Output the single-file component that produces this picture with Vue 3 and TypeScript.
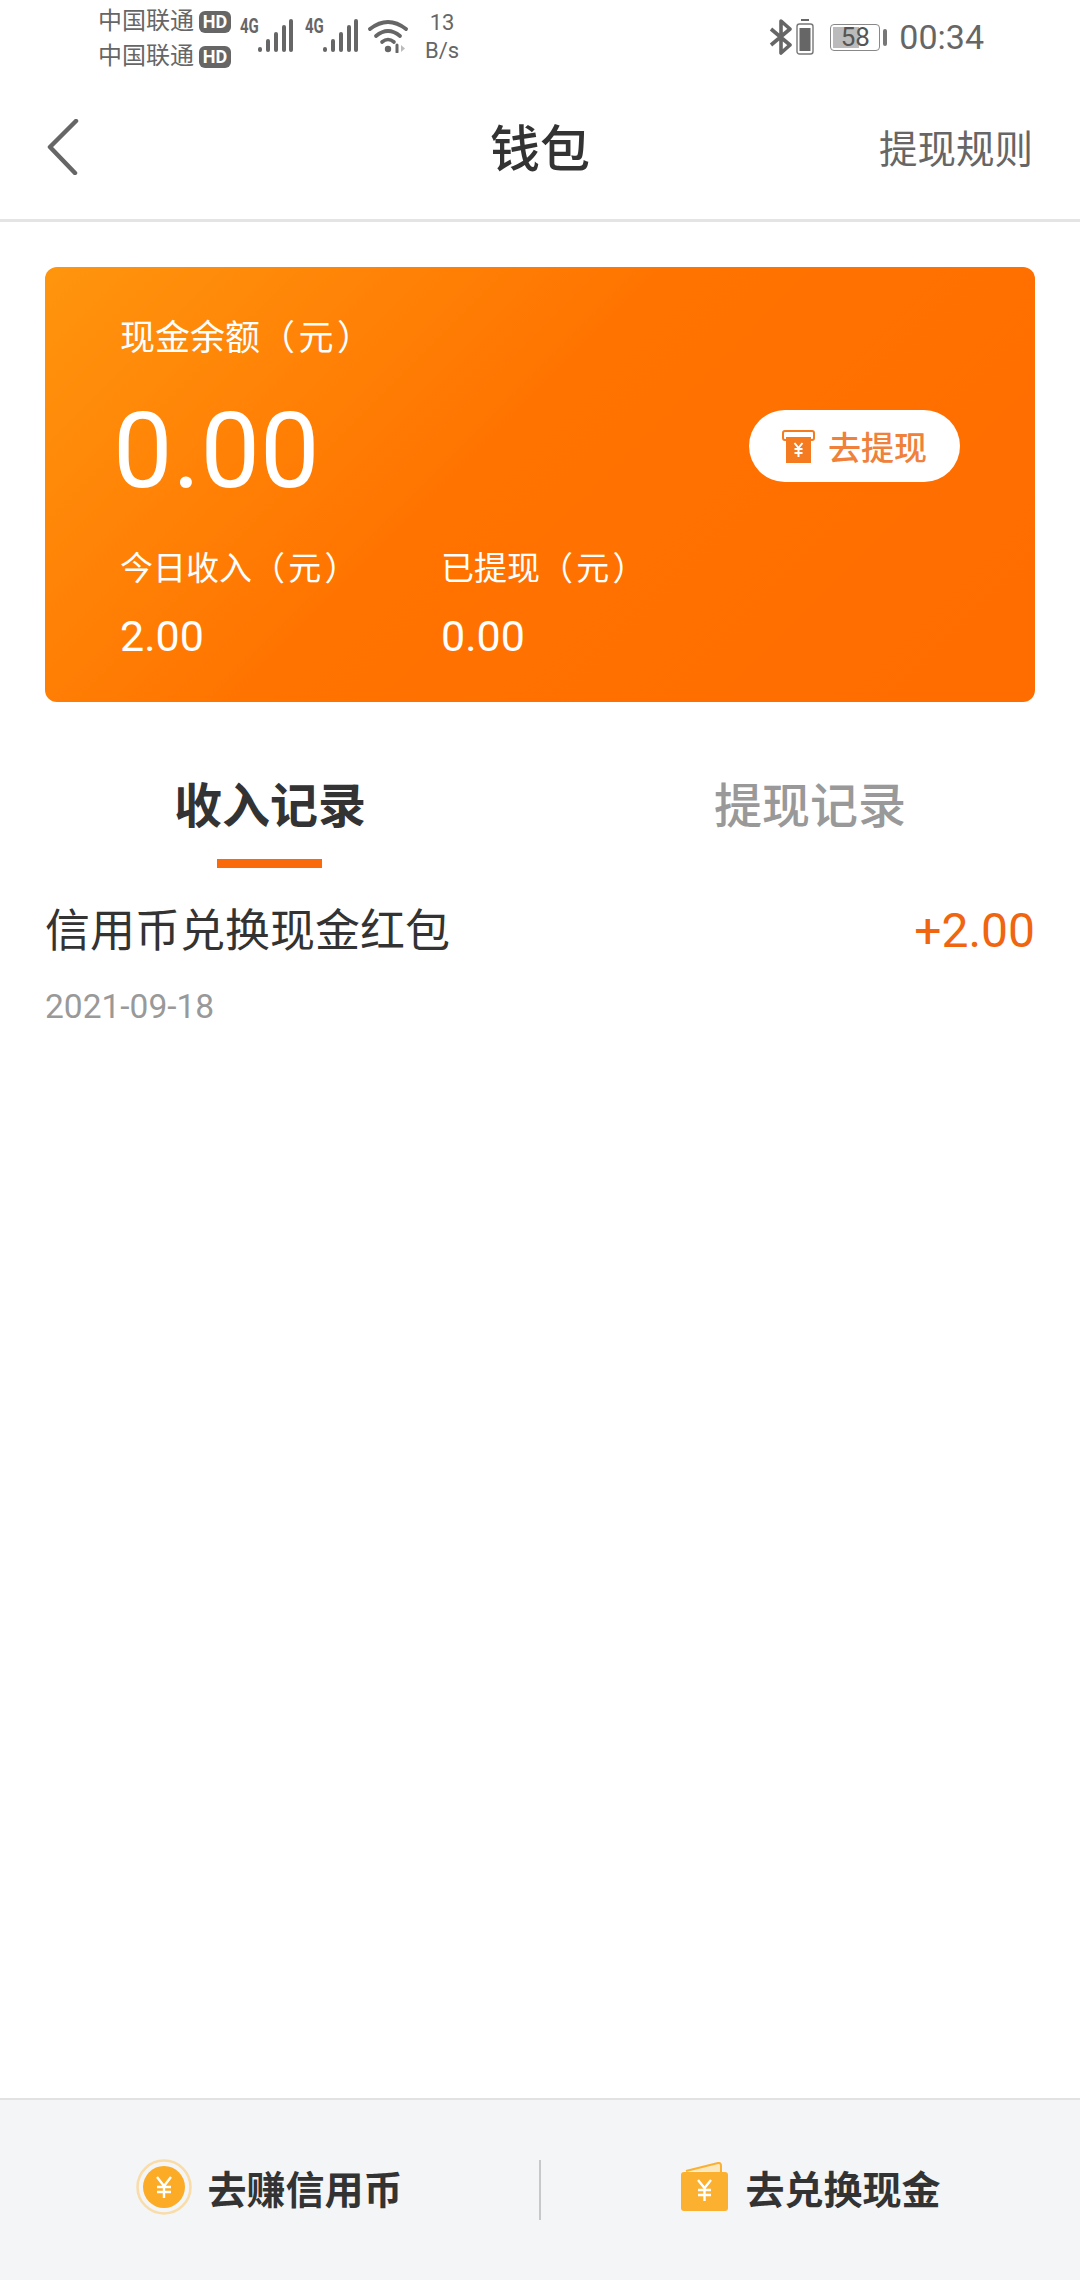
<script setup lang="ts">
interface RecordItem {
  title: string
  date: string
  amount: string
}

const records: RecordItem[] = [
  { title: '信用币兑换现金红包', date: '2021-09-18', amount: '+2.00' },
]

const signalBars = [
  { x: 0, h: 5 },
  { x: 8, h: 13 },
  { x: 16, h: 20 },
  { x: 24, h: 27 },
  { x: 31, h: 33 },
]
</script>

<template>
  <div class="page">
    <div class="status-bar">
      <div class="carriers">
        <div class="carrier"><span>中国联通</span><b class="hd">HD</b></div>
        <div class="carrier"><span>中国联通</span><b class="hd">HD</b></div>
      </div>
      <div v-for="n in 2" :key="n" class="net">
        <span class="net-label">4G</span>
        <svg class="bars" width="35" height="33" viewBox="0 0 35 33">
          <rect v-for="b in signalBars" :key="b.x" :x="b.x" :y="33 - b.h" width="4" :height="b.h" rx="2" fill="#666" />
        </svg>
      </div>
      <svg class="wifi" width="40" height="34" viewBox="0 0 40 34" fill="none" stroke="#666" stroke-linecap="round">
        <path d="M2 10 Q20 -4 38 10" stroke-width="3.8" />
        <path d="M8 17 Q20 7 32 17" stroke-width="3.8" />
        <path d="M14 23 Q20 18 26 23" stroke-width="3.6" />
        <circle cx="20" cy="30" r="3.200" fill="#666" stroke="none" />
        <path d="M29 26v7" stroke-width="3" />
        <path d="M33 26l4 3.500-4 3.500z" fill="#bbb" stroke="none" />
      </svg>
      <div class="speed"><span>13</span><span>B/s</span></div>
      <div class="status-right">
        <svg width="24" height="36" viewBox="0 0 24 36" fill="none" stroke="#666" stroke-width="3.600">
          <path d="M2 10l19 16-9 8V2l9 8L2 26" stroke-linejoin="round" />
        </svg>
        <svg width="18" height="36" viewBox="0 0 18 36">
          <rect x="5" y="0" width="8" height="2" fill="#666" />
          <rect x="1" y="5" width="16" height="30" rx="2.500" fill="none" stroke="#777" stroke-width="1.400" />
          <rect x="3.500" y="9" width="11" height="23" fill="#666" />
        </svg>
        <div class="battery">
          <div class="battery-body">
            <div class="battery-fill"></div>
            <span>58</span>
          </div>
          <div class="battery-cap"></div>
        </div>
        <span class="clock">00:34</span>
      </div>
    </div>

    <header class="nav">
      <svg class="back" width="32" height="56" viewBox="0 0 32 56" fill="none" stroke="#666" stroke-width="4.500" stroke-linecap="round" stroke-linejoin="round">
        <path d="M29 2 L3 28 L28 54" />
      </svg>
      <h1 class="nav-title">钱包</h1>
      <span class="nav-action">提现规则</span>
    </header>

    <section class="card">
      <div class="card-label">现金余额<span class="unit">（元）</span></div>
      <div class="balance-row">
        <span class="balance">0.00</span>
        <div class="withdraw-btn">
          <svg width="33" height="33" viewBox="0 0 33 33">
            <rect x="1" y="1" width="31" height="9" rx="2" fill="none" stroke="#f47b20" stroke-width="2" />
            <path d="M4 7h25v26H4z" fill="#f47b20" />
            <path d="M12.500 13l4 5 4-5M16.500 18v9M12.500 19h8M12.500 23h8" fill="none" stroke="#fff" stroke-width="2" />
          </svg>
          <span>去提现</span>
        </div>
      </div>
      <div class="stats">
        <div class="stat">
          <div class="stat-label">今日收入<span class="unit">（元）</span></div>
          <div class="stat-value">2.00</div>
        </div>
        <div class="stat">
          <div class="stat-label">已提现<span class="unit">（元）</span></div>
          <div class="stat-value">0.00</div>
        </div>
      </div>
    </section>

    <nav class="tabs">
      <div class="tab active">收入记录</div>
      <div class="tab">提现记录</div>
    </nav>

    <main class="records">
      <div v-for="item in records" :key="item.title" class="record">
        <div class="record-top">
          <span class="record-title">{{ item.title }}</span>
          <span class="record-amount">{{ item.amount }}</span>
        </div>
        <div class="record-date">{{ item.date }}</div>
      </div>
    </main>

    <footer class="footer">
      <div class="footer-btn coin-btn">
        <svg width="56" height="56" viewBox="0 0 56 56">
          <circle cx="28" cy="28" r="26.500" fill="none" stroke="#f9dca8" stroke-width="2.500" />
          <circle cx="28" cy="28" r="21" fill="#fbab25" />
          <path d="M21 18l7 9 7-9M28 27v12M21 28h14M21 33h14" fill="none" stroke="#fff" stroke-width="2.400" />
        </svg>
        <span>去赚信用币</span>
      </div>
      <div class="footer-divider"></div>
      <div class="footer-btn">
        <svg width="50" height="50" viewBox="0 0 50 50">
          <path d="M6 9L38 1q3-.5 3 3v6" fill="#fde7bd" stroke="#fbb030" stroke-width="2" />
          <rect x="1" y="10" width="47" height="39" rx="3" fill="#fbb030" />
          <path d="M18 18l6.500 8 6.500-8M24.500 26v13M18 28h13M18 33h13" fill="none" stroke="#fff" stroke-width="2.400" />
        </svg>
        <span>去兑换现金</span>
      </div>
    </footer>
  </div>
</template>

<style>
html,
body {
  margin: 0;
  background: #fff;
}
</style>

<style scoped>
.page {
  width: 1080px;
  height: 2280px;
  display: flex;
  flex-direction: column;
  background: #fff;
  font-family: "Roboto", "Noto Sans CJK SC", sans-serif;
  color: #333;
  text-spacing-trim: space-all;
}

.unit {
  font-family: "Roboto", "Noto Sans CJK TC", sans-serif;
  letter-spacing: 0.1em;
}

.status-bar {
  height: 76px;
  display: flex;
  align-items: center;
  padding: 0 0 2px 98px;
  color: #666;
  box-sizing: border-box;
}

.carriers {
  display: flex;
  flex-direction: column;
  gap: 6px;
  width: 134px;
  margin-top: 4px;
}

.carrier {
  display: flex;
  align-items: center;
  gap: 5px;
  font-size: 24px;
  line-height: 29px;
  white-space: nowrap;
}

.hd {
  background: #666;
  color: #fff;
  font-size: 18px;
  line-height: 22px;
  width: 32px;
  text-align: center;
  border-radius: 6px;
}

.net {
  position: relative;
  width: 65px;
  height: 48px;
  margin-left: 8px;
  margin-right: -8px;
}

.net-label {
  position: absolute;
  left: 0;
  top: 1px;
  font-size: 20px;
  font-weight: 700;
  transform: scaleX(0.75);
  transform-origin: left;
}

.bars {
  position: absolute;
  left: 18px;
  top: 6px;
}

.wifi {
  margin-left: 6px;
  margin-top: -2px;
}

.speed {
  display: flex;
  flex-direction: column;
  align-items: center;
  font-size: 22px;
  line-height: 28px;
  margin-left: 17px;
  width: 34px;
}

.status-right {
  margin-left: auto;
  display: flex;
  align-items: center;
  gap: 3px;
  margin-right: 96px;
}

.battery {
  display: flex;
  align-items: center;
  gap: 3px;
  margin-left: 13px;
}

.battery-body {
  position: relative;
  width: 50px;
  height: 27px;
  box-sizing: border-box;
  border: 1.500px solid #888;
  border-radius: 4px;
  text-align: center;
  font-size: 26px;
  line-height: 24px;
  color: #555;
}

.battery-fill {
  position: absolute;
  left: 2px;
  top: 2px;
  bottom: 2px;
  width: 26px;
  background: #bbb;
}

.battery-body span {
  position: relative;
}

.battery-cap {
  width: 4px;
  height: 17px;
  background: #777;
  border-radius: 2px;
}

.clock {
  font-size: 34px;
  margin-left: 9px;
}

.nav {
  position: relative;
  height: 146px;
  display: flex;
  align-items: center;
  justify-content: center;
  box-sizing: border-box;
  border-bottom: 3px solid #e4e4e4;
}

.back {
  position: absolute;
  left: 47px;
  top: 43px;
}

.nav-title {
  margin: 0 0 6px;
  font-size: 50px;
  font-weight: 500;
  color: #333;
}

.nav-action {
  position: absolute;
  right: 47px;
  top: 42px;
  font-size: 38.500px;
  color: #666;
}

.card {
  margin: 45px 45px 0;
  height: 435px;
  padding: 0 75px 0 75px;
  box-sizing: border-box;
  border-radius: 12px;
  background: linear-gradient(135deg, #ff950e 0%, #ff7300 45%, #ff6c00 100%);
  color: #fff;
}

.card-label {
  font-size: 35px;
  line-height: 48px;
  padding-top: 48px;
}

.balance-row {
  display: flex;
  align-items: center;
  justify-content: space-between;
  margin-top: 20px;
}

.balance {
  font-size: 106px;
  line-height: 128px;
  font-weight: 400;
  margin-left: -7px;
  position: relative;
  top: 4px;
}

.withdraw-btn {
  width: 211px;
  height: 72px;
  margin-bottom: 2px;
  background: #fff;
  border-radius: 36px;
  display: flex;
  align-items: center;
  justify-content: center;
  gap: 13px;
  font-size: 33px;
  font-weight: 500;
  color: #f0813a;
}

.stats {
  display: flex;
  margin-top: 35px;
}

.stat {
  width: 321px;
}

.stat-label {
  font-size: 33px;
  line-height: 46px;
}

.stat-value {
  font-size: 43px;
  line-height: 46px;
  margin-top: 21px;
}

.tabs {
  display: flex;
  height: 156px;
  margin-top: 18px;
}

.tab {
  position: relative;
  flex: 0 0 540px;
  text-align: center;
  font-size: 48px;
  font-weight: 500;
  color: #999;
  padding-top: 57px;
  box-sizing: border-box;
  line-height: 60px;
}

.tab.active {
  color: #333;
  font-weight: 700;
}

.tab.active::after {
  content: "";
  position: absolute;
  left: 217px;
  top: 139px;
  width: 105px;
  height: 9px;
  background: #fb6a0a;
}

.records {
  flex: 1;
  padding: 0 45px;
}

.record-top {
  display: flex;
  justify-content: space-between;
  align-items: center;
  height: 60px;
  margin-top: 23px;
}

.record-title {
  font-size: 45px;
  color: #333;
  margin-bottom: 4px;
}

.record-amount {
  font-size: 48px;
  color: #f0650f;
  margin-top: 2px;
}

.record-date {
  font-size: 33.500px;
  color: #999;
  margin-top: 28px;
}

.footer {
  height: 182px;
  box-sizing: border-box;
  border-top: 2px solid #e2e2e2;
  padding-bottom: 6px;
  background: #f4f5f7;
  display: flex;
  align-items: center;
}

.footer-btn {
  flex: 1;
  display: flex;
  align-items: center;
  justify-content: center;
  gap: 15px;
  font-size: 39px;
  font-weight: 700;
  color: #333;
}

.footer-divider {
  width: 2px;
  height: 60px;
  margin-top: 6px;
  background: #c8c8c8;
}
</style>
